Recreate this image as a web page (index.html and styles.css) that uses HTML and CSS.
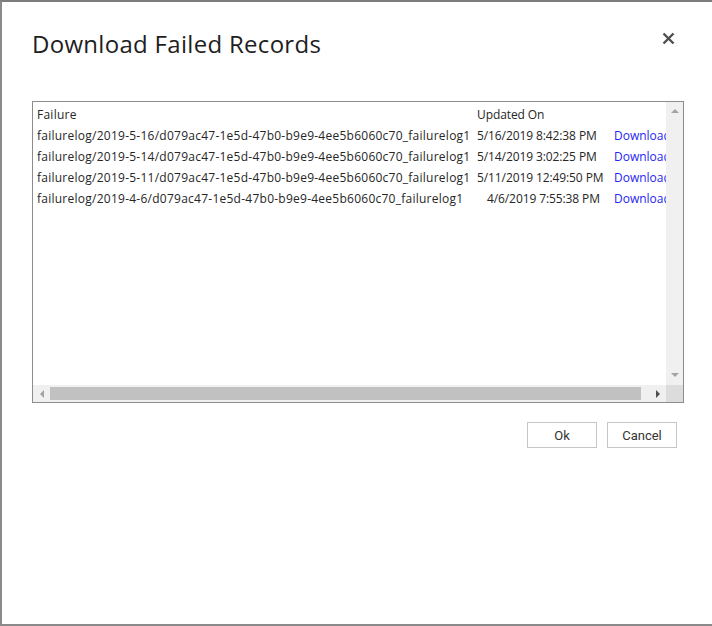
FILE: index.html
```html
<!DOCTYPE html>
<html lang="en">
<head>
<meta charset="utf-8">
<title>Download Failed Records</title>
<link rel="stylesheet" href="styles.css">
</head>
<body>
<div class="dialog">
  <div class="header">
    <h1 class="title">Download Failed Records</h1>
    <button class="close" aria-label="Close">
      <svg viewBox="0 0 15 15" width="15" height="15"><path d="M2.5 2.5 L12.5 12.5 M12.5 2.5 L2.5 12.5" stroke="#4f4f4f" stroke-width="2.4" fill="none"/></svg>
    </button>
  </div>
  <div class="list-box">
    <div class="viewport">
      <table class="records">
        <colgroup><col class="c-path"><col class="c-date"><col class="c-link"></colgroup>
        <thead>
          <tr><th class="path">Failure</th><th class="date">Updated On</th><th></th></tr>
        </thead>
        <tbody>
          <tr><td class="path">failurelog/2019-5-16/d079ac47-1e5d-47b0-b9e9-4ee5b6060c70_failurelog1</td><td class="date">5/16/2019 8:42:38 PM</td><td><a href="#" class="dl">Download</a></td></tr>
          <tr><td class="path">failurelog/2019-5-14/d079ac47-1e5d-47b0-b9e9-4ee5b6060c70_failurelog1</td><td class="date">5/14/2019 3:02:25 PM</td><td><a href="#" class="dl">Download</a></td></tr>
          <tr><td class="path">failurelog/2019-5-11/d079ac47-1e5d-47b0-b9e9-4ee5b6060c70_failurelog1</td><td class="date">5/11/2019 12:49:50 PM</td><td><a href="#" class="dl">Download</a></td></tr>
          <tr><td class="path">failurelog/2019-4-6/d079ac47-1e5d-47b0-b9e9-4ee5b6060c70_failurelog1</td><td class="date date-pad">4/6/2019 7:55:38 PM</td><td><a href="#" class="dl">Download</a></td></tr>
        </tbody>
      </table>
    </div>
    <div class="vscroll"><span class="arrow arrow-up"></span><span class="arrow arrow-down"></span></div>
    <div class="hscroll"><span class="arrow-box"><span class="arrow arrow-left"></span></span><span class="thumb"></span><span class="arrow-box"><span class="arrow arrow-right"></span></span></div>
    <div class="corner"></div>
  </div>
  <div class="actions">
    <button class="btn">Ok</button>
    <button class="btn">Cancel</button>
  </div>
</div>
</body>
</html>
```

FILE: styles.css
```css
html, body {
  margin: 0;
  padding: 0;
  background: #ffffff;
}

.dialog {
  width: 712px;
  height: 626px;
  box-sizing: border-box;
  border-top: 2px solid #7c7c7c;
  border-left: 2px solid #8a8a8a;
  border-bottom: 2px solid #8a8a8a;
  padding: 25px 28px 0 30px;
  background: #ffffff;
  font-family: "Open Sans", "Noto Sans", sans-serif;
  color: #262626;
}

.header {
  display: flex;
  justify-content: space-between;
  align-items: flex-start;
  height: 33px;
  margin-bottom: 41px;
}

.title {
  margin: 0;
  font-size: 24px;
  line-height: 33px;
  font-weight: 400;
  letter-spacing: 0.3px;
  color: #1e1e1e;
}

.close {
  width: 15px;
  height: 15px;
  margin: 4px 8px 0 0;
  padding: 0;
  border: 0;
  background: transparent;
  display: flex;
}

.list-box {
  width: 652px;
  height: 302px;
  box-sizing: border-box;
  border: 1px solid #8c8c8c;
  display: grid;
  grid-template-columns: 1fr 17px;
  grid-template-rows: 1fr 17px;
}

.viewport {
  overflow: hidden;
  background: #ffffff;
  padding-top: 2px;
}

.records {
  border-collapse: collapse;
  table-layout: fixed;
  width: 660px;
  margin-left: 4px;
  font-size: 12px;
}

.c-path { width: 440px; }
.c-date { width: 137px; }
.c-link { width: 83px; }

.records th,
.records td {
  height: 21px;
  padding: 0;
  text-align: left;
  font-weight: 400;
  white-space: nowrap;
  overflow: hidden;
  line-height: 21px;
  vertical-align: middle;
}

.records .path {
  letter-spacing: 0.25px;
}

.records .date {
  letter-spacing: -0.1px;
}

.records .date-pad {
  padding-left: 10px;
}

.dl {
  color: #2626f0;
  text-decoration: none;
}

.vscroll {
  background: #f0f0f0;
  display: flex;
  flex-direction: column;
  justify-content: space-between;
  align-items: center;
  padding: 7px 0 8px;
}

.hscroll {
  background: #f0f0f0;
  display: flex;
  align-items: center;
  justify-content: space-between;
}

.arrow-box {
  width: 17px;
  height: 17px;
  display: flex;
  align-items: center;
  justify-content: center;
}

.thumb {
  width: 591px;
  height: 13px;
  background: #c1c1c1;
  margin-right: auto;
}

.corner {
  background: #dcdcdc;
}

.arrow {
  width: 0;
  height: 0;
  display: block;
}

.arrow-up {
  border-left: 4px solid transparent;
  border-right: 4px solid transparent;
  border-bottom: 4px solid #a3a3a3;
}

.arrow-down {
  border-left: 4px solid transparent;
  border-right: 4px solid transparent;
  border-top: 4px solid #a3a3a3;
}

.arrow-left {
  border-top: 4px solid transparent;
  border-bottom: 4px solid transparent;
  border-right: 4px solid #a3a3a3;
}

.arrow-right {
  border-top: 4px solid transparent;
  border-bottom: 4px solid transparent;
  border-left: 4px solid #505050;
}

.actions {
  display: flex;
  justify-content: flex-end;
  gap: 10px;
  margin-top: 19px;
  padding-right: 7px;
}

.btn {
  width: 70px;
  height: 26px;
  box-sizing: border-box;
  border: 1px solid #c6c6c6;
  background: #ffffff;
  font-family: Roboto, "Liberation Sans", sans-serif;
  font-size: 13px;
  color: #333333;
  padding: 0;
}
```
